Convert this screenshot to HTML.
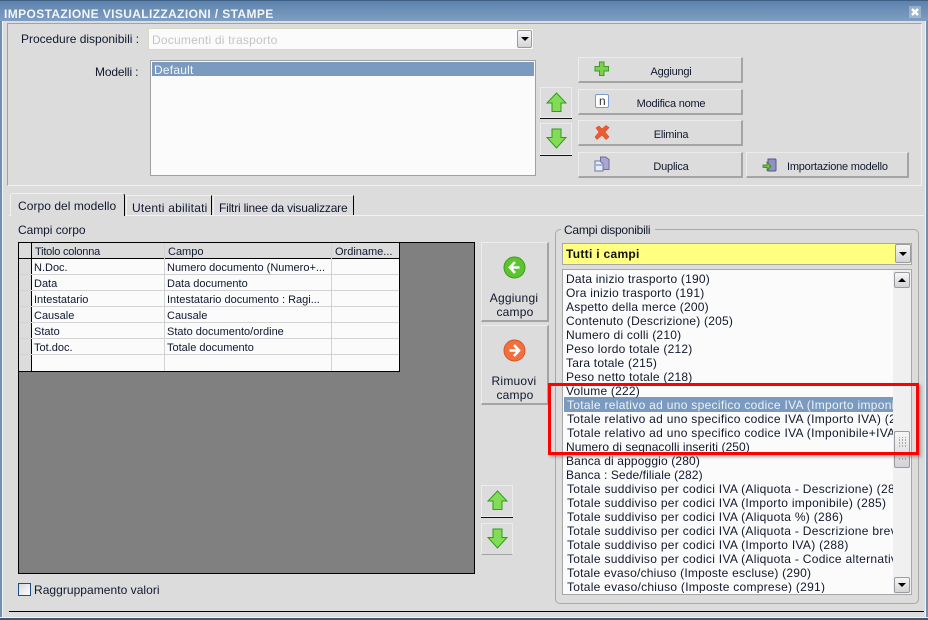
<!DOCTYPE html>
<html><head><meta charset="utf-8"><style>
html,body{margin:0;padding:0;width:928px;height:620px;overflow:hidden;background:#dcdcdc}
body{position:relative;font:12px "Liberation Sans",sans-serif;color:#10182c}
div,svg,span{position:absolute;box-sizing:border-box}
.t{white-space:nowrap;line-height:14px;height:14px;letter-spacing:.22px}
.s{font-size:11px;letter-spacing:-.22px}
.m{font-size:11px;letter-spacing:0}
.b{background:#dcdcdc;border:1px solid #ececec;border-right:2px solid #a4a4a4;border-bottom:2px solid #a4a4a4}
.c{text-align:center}
.g{background:#dcdcdc;border:1px solid #ececec}
.sb{background:linear-gradient(#f6f6f6,#d4d4d8);border:1px solid #9a9aa0;border-radius:2px}
.dn{width:0;height:0;border-left:4px solid transparent;border-right:4px solid transparent;border-top:4px solid #000}
.up{width:0;height:0;border-left:4px solid transparent;border-right:4px solid transparent;border-bottom:4px solid #000}
.l{position:absolute;display:block;height:14px;line-height:14px;white-space:nowrap;padding-left:4px;letter-spacing:.3px;color:#10182c}
.n{padding-left:3px;letter-spacing:.22px}
</style></head><body>
<!-- window frame -->
<div style="left:0;top:0;width:928px;height:21px;background:linear-gradient(#5c83ad,#7f9ec2);border-top:1px solid #3f5f85"></div>
<div style="left:0;top:21px;width:2px;height:599px;background:#6f8fb5"></div>
<div style="left:926px;top:21px;width:2px;height:599px;background:#6f8fb5"></div>
<div style="left:2px;top:21px;width:1px;height:596px;background:#f2f2f2"></div>
<div style="left:925px;top:21px;width:1px;height:596px;background:#f2f2f2"></div>
<div style="left:0;top:617px;width:928px;height:3px;background:#3d5a72;border-top:1px solid #f2f2f2"></div>
<div class="t" style="left:4px;top:7px;font-weight:bold;color:#f2f5f9;font-size:12px;letter-spacing:.38px">IMPOSTAZIONE VISUALIZZAZIONI / STAMPE</div>
<div style="left:909px;top:6px;width:12px;height:12px;background:#e6ecf3;opacity:.35"></div>
<svg style="left:909px;top:6px" width="12" height="12"><path d="M3 3L9 9M9 3L3 9" stroke="#fff" stroke-width="2.400"/></svg>

<!-- top panel -->
<div style="left:7px;top:23px;width:915px;height:163px;border:1px solid;border-color:#a2a2a2 #f2f2f2 #f2f2f2 #a2a2a2"></div>
<div class="t" style="left:21px;top:32px;letter-spacing:0">Procedure disponibili :</div>
<div style="left:148px;top:28px;width:386px;height:22px;background:#fbfbfb;border:1px solid #d8d8c8"></div>
<div class="t" style="left:152px;top:33px;color:#c4c4c4">Documenti di trasporto</div>
<div class="sb" style="left:517px;top:30px;width:15px;height:18px"></div><div class="dn" style="left:520.5px;top:37px"></div>
<div class="t" style="left:95px;top:65px;letter-spacing:-.15px">Modelli :</div>
<div style="left:150px;top:60px;width:386px;height:116px;background:#fbfbfb;border:1px solid #a0a0a0;"></div>
<div style="left:152px;top:62px;width:382px;height:14px;background:#7a9abf"></div>
<div class="t" style="left:154px;top:63px;color:#f4f6fa">Default</div>

<div class="b" style="left:578px;top:57px;width:165px;height:26px"></div>
<svg style="left:594px;top:61px" width="16" height="16"><path d="M5.500 1h4.500v4.500h4.500v4.500h-4.500v4.500h-4.500v-4.500h-4.500v-4.500h4.500z" fill="#7ed04c" stroke="#3d9a2a"/></svg>
<div class="t c s" style="left:578px;top:65px;width:186px">Aggiungi</div>
<div class="b" style="left:578px;top:89px;width:165px;height:26px"></div>
<div style="left:595px;top:94px;width:14px;height:14px;background:#fff;border:1px solid #7d97cf;border-radius:2px"></div>
<div class="t" style="left:599px;top:94px;color:#333;font-size:12px">n</div>
<div class="t c s" style="left:578px;top:97px;width:186px">Modifica nome</div>
<div class="b" style="left:578px;top:120px;width:165px;height:26px"></div>
<svg style="left:594px;top:125px" width="16" height="15"><path d="M2 3L5 1L8 4L12 0.500L15 2.500L11 7L15 12L12 14.500L8 10L3 14.500L1 12L5 7z" fill="#ee5a32" stroke="#d94a22" stroke-width=".6"/></svg>
<div class="t c s" style="left:578px;top:128px;width:186px">Elimina</div>
<div class="b" style="left:578px;top:152px;width:165px;height:26px"></div>
<svg style="left:594px;top:156px" width="16" height="16"><path d="M6.500 1h5l3.500 2.500v10h-8.500z" fill="#a8a8d0" stroke="#6b6ba0"/><path d="M1 5h5l3 3v7h-8z" fill="#e8ecf8" stroke="#6b74a8"/><path d="M2 9h6" stroke="#6b74a8"/></svg>
<div class="t c s" style="left:578px;top:160px;width:186px">Duplica</div>
<div class="b" style="left:746px;top:152px;width:163px;height:26px"></div>
<svg style="left:762px;top:157px" width="16" height="16"><path d="M6 2h7q1 0 1 1v10q0 1-1 1h-7z" fill="#8f92c0" stroke="#55587f"/><path d="M1 8h4v-3l4 4.500-4 4v-3h-4z" fill="#6cc03c" stroke="#2f7a20" stroke-width=".7"/></svg>
<div class="t s" style="left:787px;top:160px">Importazione modello</div>

<!-- arrow buttons -->
<div class="g" style="left:540px;top:87px;width:32px;height:31px"></div><div style="left:540px;top:118px;width:32px;height:1px;background:#111"></div>
<svg style="left:546px;top:92px" width="21" height="21"><path d="M10.500 1L20 11h-5v8.500h-9v-8.500h-5z" fill="#82dc55" stroke="#2f9c1a"/></svg>
<div class="g" style="left:540px;top:123px;width:32px;height:32px"></div><div style="left:540px;top:155px;width:32px;height:1px;background:#111"></div>
<svg style="left:546px;top:128px" width="21" height="21"><path d="M6 1h9v8.500h5L10.500 20 1 9.500h5z" fill="#82dc55" stroke="#2f9c1a"/></svg>

<!-- tabs -->
<div style="left:9px;top:215px;width:915px;height:1px;background:#f2f2f2"></div>
<div style="left:10px;top:193px;width:115px;height:23px;background:#dcdcdc;border:1px solid #f0f0f0;border-right:1px solid #000;border-bottom:0;border-radius:3px 3px 0 0"></div>
<div class="t" style="left:18px;top:199px;letter-spacing:.05px">Corpo del modello</div>
<div style="left:126px;top:195px;width:86px;height:20px;border:1px solid #f0f0f0;border-right:1px solid #000;border-bottom:0"></div>
<div class="t" style="left:132px;top:201px">Utenti abilitati</div>
<div style="left:213px;top:195px;width:141px;height:20px;border:1px solid #f0f0f0;border-right:1px solid #000;border-bottom:0"></div>
<div class="t" style="left:219px;top:201px;letter-spacing:-.2px">Filtri linee da visualizzare</div>

<!-- grid -->
<div class="t" style="left:18px;top:223px;letter-spacing:-.05px">Campi corpo</div>
<div style="left:18px;top:242px;width:457px;height:332px;background:#808080;border:1px solid #000"></div>
<div style="left:18px;top:242px;width:382px;height:130px;background:#fbfbfb;border:1px solid #000"></div>
<div style="left:19px;top:243px;width:12px;height:128px;background:#dcdcdc"></div>
<div style="left:31px;top:243px;width:368px;height:15px;background:#dcdcdc"></div>
<div style="left:19px;top:258px;width:380px;height:1px;background:#000"></div>
<div style="left:31px;top:243px;width:1px;height:128px;background:#000"></div>
<div style="left:164px;top:243px;width:1px;height:128px;background:#d2d2d2"></div>
<div style="left:331px;top:243px;width:1px;height:128px;background:#d2d2d2"></div>
<div style="left:19px;top:274px;width:380px;height:1px;background:#d2d2d2"></div>
<div style="left:19px;top:290px;width:380px;height:1px;background:#d2d2d2"></div>
<div style="left:19px;top:306px;width:380px;height:1px;background:#d2d2d2"></div>
<div style="left:19px;top:322px;width:380px;height:1px;background:#d2d2d2"></div>
<div style="left:19px;top:338px;width:380px;height:1px;background:#d2d2d2"></div>
<div style="left:19px;top:354px;width:380px;height:1px;background:#d2d2d2"></div>
<div class="t s" style="left:35px;top:245px">Titolo colonna</div><div class="t m" style="left:168px;top:245px">Campo</div><div class="t m" style="left:335px;top:245px">Ordiname...</div>
<div class="t m" style="left:34px;top:261px">N.Doc.</div><div class="t m" style="left:167px;top:261px">Numero documento (Numero+...</div>
<div class="t m" style="left:34px;top:277px">Data</div><div class="t m" style="left:167px;top:277px">Data documento</div>
<div class="t m" style="left:34px;top:293px">Intestatario</div><div class="t m" style="left:167px;top:293px">Intestatario documento : Ragi...</div>
<div class="t m" style="left:34px;top:309px">Causale</div><div class="t m" style="left:167px;top:309px">Causale</div>
<div class="t m" style="left:34px;top:325px">Stato</div><div class="t m" style="left:167px;top:325px">Stato documento/ordine</div>
<div class="t m" style="left:34px;top:341px">Tot.doc.</div><div class="t m" style="left:167px;top:341px">Totale documento</div>

<!-- checkbox -->
<div style="left:18px;top:583px;width:13px;height:13px;border:1px solid #1f4f80;background:linear-gradient(135deg,#d8d8d8,#fff)"></div>
<div class="t" style="left:34px;top:583px;letter-spacing:.04px">Raggruppamento valori</div>
<div style="left:9px;top:611px;width:915px;height:1px;background:#000"></div>

<!-- add / remove -->
<div class="b" style="left:481px;top:242px;width:68px;height:80px"></div>
<svg style="left:503px;top:256px" width="24" height="24"><circle cx="11.500" cy="11.500" r="10.500" fill="#5cc42e" stroke="#3f9c1c"/><path d="M12 6L7 11.500l5 5.500M7.500 11.500h9" fill="none" stroke="#fff" stroke-width="2.600"/></svg>
<div class="t c" style="left:481px;top:291px;width:66px">Aggiungi</div><div class="t c" style="left:481px;top:305px;width:68px">campo</div>
<div class="b" style="left:481px;top:325px;width:68px;height:80px"></div>
<svg style="left:503px;top:339px" width="24" height="24"><circle cx="11.500" cy="11.500" r="10.500" fill="#f2703e" stroke="#d85426"/><path d="M11 6l5 5.500-5 5.500M6.500 11.500h9" fill="none" stroke="#fff" stroke-width="2.600"/></svg>
<div class="t c" style="left:481px;top:374px;width:66px">Rimuovi</div><div class="t c" style="left:481px;top:388px;width:68px">campo</div>
<div class="g" style="left:481px;top:485px;width:32px;height:32px"></div><div style="left:481px;top:517px;width:32px;height:1px;background:#111"></div>
<svg style="left:487px;top:490px" width="21" height="21"><path d="M10.500 1L20 11h-5v8.500h-9v-8.500h-5z" fill="#82dc55" stroke="#2f9c1a"/></svg>
<div class="g" style="left:481px;top:523px;width:32px;height:32px;border-bottom:1px solid #a4a4a4"></div>
<svg style="left:487px;top:528px" width="21" height="21"><path d="M6 1h9v8.500h5L10.500 20 1 9.500h5z" fill="#82dc55" stroke="#2f9c1a"/></svg>

<!-- group -->
<div style="left:555px;top:229px;width:364px;height:375px;border:1px solid #a8a8a8;border-radius:5px"></div>
<div style="left:561px;top:224px;width:94px;height:12px;background:#dcdcdc"></div>
<div class="t" style="left:564px;top:223px;letter-spacing:-.26px">Campi disponibili</div>
<div style="left:562px;top:243px;width:350px;height:22px;background:#ffff80;border:1px solid #a8a8a8"></div>
<div class="t" style="left:566px;top:247px;font-weight:bold;color:#111;letter-spacing:.3px">Tutti i campi</div>
<div class="sb" style="left:895px;top:244px;width:16px;height:19px"></div><div class="dn" style="left:899px;top:252px"></div>
<div style="left:562px;top:269px;width:350px;height:326px;background:#fbfbfb;border:1px solid #a8a8a8"></div>
<div style="left:564px;top:397px;width:329px;height:15px;background:#7a9abf"></div>
<div style="left:563px;top:272px;width:330px;height:321px;overflow:hidden">
<span class="l n" style="top:0">Data inizio trasporto (190)</span>
<span class="l n" style="top:14px">Ora inizio trasporto (191)</span>
<span class="l n" style="top:28px">Aspetto della merce (200)</span>
<span class="l n" style="top:42px">Contenuto (Descrizione) (205)</span>
<span class="l n" style="top:56px">Numero di colli (210)</span>
<span class="l n" style="top:70px">Peso lordo totale (212)</span>
<span class="l n" style="top:84px">Tara totale (215)</span>
<span class="l n" style="top:98px">Peso netto totale (218)</span>
<span class="l n" style="top:112px">Volume (222)</span>
<span class="l" style="top:126px;color:#eef2f7">Totale relativo ad uno specifico codice IVA (Importo imponibile) (223)</span>
<span class="l" style="top:140px">Totale relativo ad uno specifico codice IVA (Importo IVA) (224)</span>
<span class="l" style="top:154px">Totale relativo ad uno specifico codice IVA (Imponibile+IVA) (225)</span>
<span class="l n" style="top:168px;letter-spacing:.07px">Numero di segnacolli inseriti (250)</span>
<span class="l n" style="top:182px;letter-spacing:.14px">Banca di appoggio (280)</span>
<span class="l n" style="top:196px;letter-spacing:.1px">Banca : Sede/filiale (282)</span>
<span class="l" style="top:210px">Totale suddiviso per codici IVA (Aliquota - Descrizione) (284)</span>
<span class="l" style="top:224px">Totale suddiviso per codici IVA (Importo imponibile) (285)</span>
<span class="l" style="top:238px">Totale suddiviso per codici IVA (Aliquota %) (286)</span>
<span class="l" style="top:252px">Totale suddiviso per codici IVA (Aliquota - Descrizione breve) (287)</span>
<span class="l" style="top:266px">Totale suddiviso per codici IVA (Importo IVA) (288)</span>
<span class="l" style="top:280px">Totale suddiviso per codici IVA (Aliquota - Codice alternativo) (289)</span>
<span class="l" style="top:294px;letter-spacing:.22px">Totale evaso/chiuso (Imposte escluse) (290)</span>
<span class="l" style="top:308px;letter-spacing:.26px">Totale evaso/chiuso (Imposte comprese) (291)</span>
</div>
<div style="left:893px;top:270px;width:18px;height:324px;background:#f0f0f0"></div>
<div class="sb" style="left:894px;top:272px;width:16px;height:16px"></div><div class="up" style="left:898px;top:278px"></div>
<div class="sb" style="left:894px;top:577px;width:16px;height:16px"></div><div class="dn" style="left:898px;top:583px"></div>
<div class="sb" style="left:894px;top:431px;width:16px;height:37px"></div>
<svg style="left:898px;top:437px" width="9" height="26"><path d="M1 0h1M4 0h1M7 0h1M1 3h1M4 3h1M7 3h1M1 6h1M4 6h1M7 6h1M1 9h1M4 9h1M7 9h1M1 22h1M4 22h1M7 22h1" stroke="#aaa" stroke-width="2"/></svg>

<!-- red highlight -->
<div style="left:548px;top:383px;width:371px;height:72px;border:3.500px solid #f00;box-shadow:2px 2px 3px rgba(0,0,0,.3)"></div>
</body></html>
